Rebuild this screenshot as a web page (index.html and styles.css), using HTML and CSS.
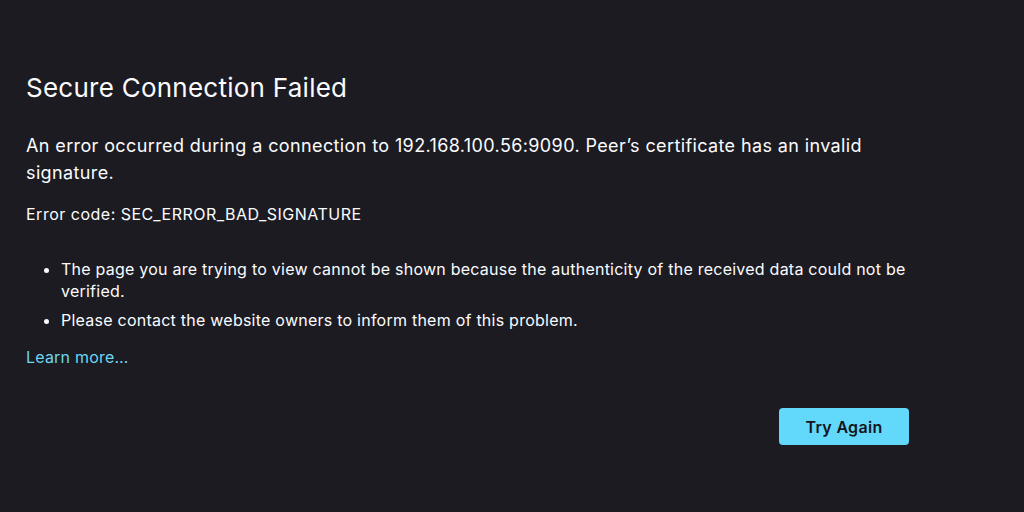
FILE: index.html
```html
<!DOCTYPE html>
<html lang="en">
<head>
<meta charset="utf-8">
<title>Secure Connection Failed</title>
<link rel="stylesheet" href="styles.css">
</head>
<body>
<main class="container">
  <h1 class="title">Secure Connection Failed</h1>
  <p class="desc">An error occurred during a connection to 192.168.100.56:9090. Peer’s certificate has an invalid signature.</p>
  <p class="code">Error code: SEC_ERROR_BAD_SIGNATURE</p>
  <ul class="list">
    <li>The page you are trying to view cannot be shown because the authenticity of the received data could not be verified.</li>
    <li>Please contact the website owners to inform them of this problem.</li>
  </ul>
  <a class="learn" href="#">Learn more…</a>
  <div class="actions">
    <button class="btn">Try Again</button>
  </div>
</main>
</body>
</html>
```

FILE: styles.css
```css
html, body {
  margin: 0;
  padding: 0;
  background: #1c1b22;
  color: #fbfbfe;
  font-family: Inter, "Noto Sans", sans-serif;
}
.container {
  width: 883px;
  padding: 71px 0 0 26px;
  display: flex;
  flex-direction: column;
}
.title {
  margin: 0;
  font-size: 26px;
  font-weight: 400;
  line-height: 34px;
  letter-spacing: 0.25px;
}
.desc {
  margin: 27px 0 0;
  font-size: 18px;
  line-height: 27px;
  letter-spacing: 0.38px;
}
.code {
  margin: 17px 0 0;
  font-size: 16px;
  line-height: 22px;
  letter-spacing: 0.5px;
}
.list {
  margin: 33px 0 0;
  padding-left: 35px;
  font-size: 16px;
  line-height: 22px;
  letter-spacing: 0.24px;
}
.list li + li {
  margin-top: 7px;
}
.learn {
  margin-top: 15px;
  align-self: flex-start;
  font-size: 16px;
  line-height: 22px;
  letter-spacing: 0.2px;
  color: #6dd6f2;
  text-decoration: none;
}
.actions {
  margin-top: 40px;
  display: flex;
  justify-content: flex-end;
}
.btn {
  width: 130px;
  height: 37px;
  border: none;
  border-radius: 4px;
  background: #62d9fb;
  color: #15141a;
  font-family: Inter, "Noto Sans", sans-serif;
  font-size: 16px;
  font-weight: 600;
  letter-spacing: 0.3px;
}
```
